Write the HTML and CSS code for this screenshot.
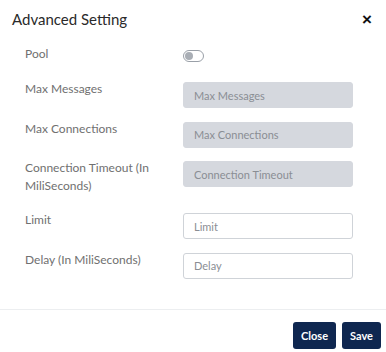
FILE: index.html
```html
<!DOCTYPE html>
<html lang="en">
<head>
    <meta charset="UTF-8">
    <meta name="viewport" content="width=device-width, initial-scale=1.0">
    <title>Advanced Setting</title>
    <link rel="stylesheet" href="styles.css">
</head>
<body>

    <div class="modal">
        <div class="modal-header">
            <h2 class="modal-title">Advanced Setting</h2>
            <button class="btn-x">&times;</button>
        </div>

        <div class="modal-body">
            <div class="form-row row-pool">
                <label class="form-label">Pool</label>
                <div class="toggle"><span class="knob"></span></div>
            </div>
            <div class="form-row">
                <label class="form-label">Max Messages</label>
                <input class="form-input" type="text" placeholder="Max Messages" disabled>
            </div>
            <div class="form-row">
                <label class="form-label">Max Connections</label>
                <input class="form-input" type="text" placeholder="Max Connections" disabled>
            </div>
            <div class="form-row">
                <label class="form-label">Connection Timeout (In MiliSeconds)</label>
                <input class="form-input" type="text" placeholder="Connection Timeout" disabled>
            </div>
            <div class="form-row">
                <label class="form-label">Limit</label>
                <input class="form-input" type="text" placeholder="Limit">
            </div>
            <div class="form-row">
                <label class="form-label">Delay (In MiliSeconds)</label>
                <input class="form-input" type="text" placeholder="Delay">
            </div>
        </div>

        <div class="modal-footer">
            <button class="btn-dark">Close</button>
            <button class="btn-dark">Save</button>
        </div>
    </div>

</body>
</html>
```

FILE: styles.css
```css
body{
    margin: 0;
    background: #fff;
    font-family: 'Lato', 'Noto Sans', sans-serif;
}

.modal{
    width: 386px;
    height: 352px;
    display: flex;
    flex-direction: column;
}

.modal-header{
    display: flex;
    justify-content: space-between;
    align-items: center;
    height: 38px;
    padding: 0 14px 0 12px;
}

.modal-title{
    margin: 0;
    font-size: 15px;
    font-weight: normal;
    color: #2a2a2a;
}

.btn-x{
    border: 0;
    background: none;
    padding: 0;
    font-size: 17px;
    font-weight: bold;
    color: #111;
    line-height: 1;
}

.modal-body{
    padding: 9px 33px 0 25px;
    height: 262px;
}

.form-row{
    display: flex;
    align-items: flex-start;
    margin-bottom: 13.5px;
}

.row-pool{
    margin-bottom: 14.5px;
}

.form-label{
    width: 158px;
    padding-right: 30px;
    box-sizing: border-box;
    margin-top: -2px;
    padding-bottom: 4.5px;
    font-size: 12px;
    line-height: 18px;
    color: #707070;
}

.toggle{
    position: relative;
    width: 21px;
    height: 12px;
    margin-top: 3px;
    border: 1px solid #9aa0a8;
    border-radius: 7px;
    box-sizing: border-box;
}

.knob{
    position: absolute;
    top: 1px;
    left: 1px;
    width: 8px;
    height: 8px;
    border-radius: 50%;
    background: #a9aeb5;
}

.form-input{
    width: 170px;
    height: 26px;
    box-sizing: border-box;
    padding: 0 10px;
    border: 1px solid #cfd3d8;
    border-radius: 3px;
    background: #fff;
    font-family: inherit;
    font-size: 11px;
    color: #333;
}

.form-input:disabled{
    background: #d5d8de;
    border-color: #d5d8de;
}

.form-input::placeholder{
    color: #8a8e94;
}

.modal-footer{
    display: flex;
    justify-content: flex-end;
    align-items: center;
    gap: 6px;
    border-top: 1px solid #eceef0;
    padding: 12px 5px 0 0;
}

.btn-dark{
    height: 27px;
    padding: 0 8px;
    border: 0;
    border-radius: 3px;
    background: #0f2750;
    color: #fff;
    font-family: inherit;
    font-size: 11px;
    font-weight: bold;
}
```
